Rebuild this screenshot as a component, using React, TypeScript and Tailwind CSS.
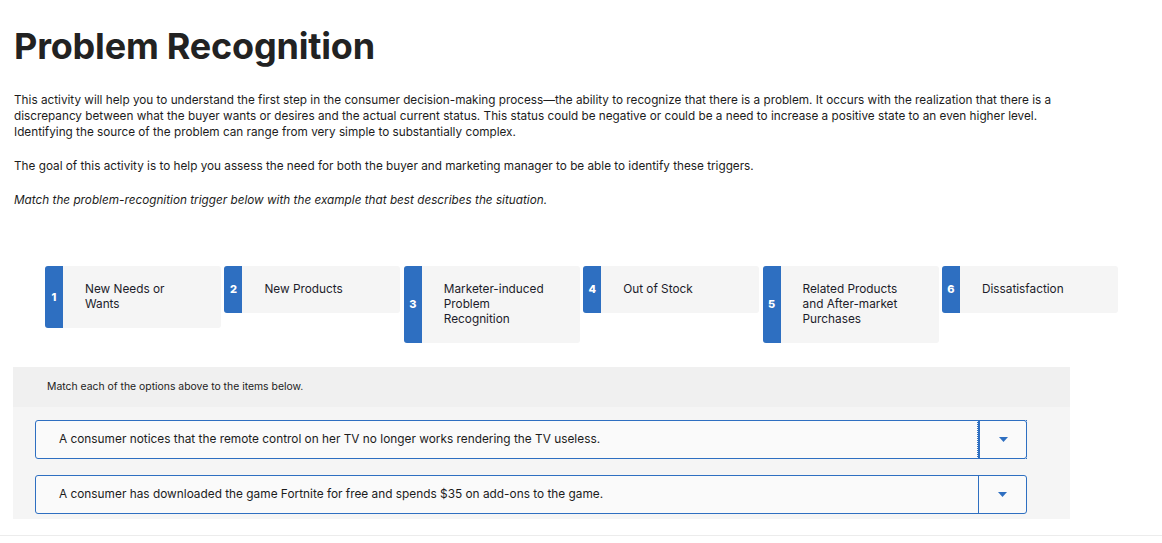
const triggers = [
  { n: 1, label: "New Needs or Wants" },
  { n: 2, label: "New Products" },
  { n: 3, label: "Marketer-induced Problem Recognition" },
  { n: 4, label: "Out of Stock" },
  { n: 5, label: "Related Products and After-market Purchases" },
  { n: 6, label: "Dissatisfaction" },
];

const items = [
  "A consumer notices that the remote control on her TV no longer works rendering the TV useless.",
  "A consumer has downloaded the game Fortnite for free and spends $35 on add-ons to the game.",
];

function Caret() {
  return (
    <svg width="9" height="5" viewBox="0 0 9 5" aria-hidden>
      <path d="M0 0h9L4.5 5z" fill="#2e6fc1" />
    </svg>
  );
}

export default function App() {
  return (
    <div className="min-h-[543px] bg-white font-['Inter',sans-serif] text-[#1c1c1c]">
      <div className="px-[14px] pt-[24px]">
        <h1 className="text-[36px] font-bold leading-[44px] tracking-[-0.2px] text-[#222]">Problem Recognition</h1>
        <p className="mt-[24px] w-[1060px] text-[11.75px] leading-[16px]">
          This activity will help you to understand the first step in the consumer decision-making process—the ability to
          recognize that there is a problem. It occurs with the realization that there is a discrepancy between what the
          buyer wants or desires and the actual current status. This status could be negative or could be a need to
          increase a positive state to an even higher level. Identifying the source of the problem can range from very
          simple to substantially complex.
        </p>
        <p className="mt-[18px] text-[11.75px] leading-[16px]">
          The goal of this activity is to help you assess the need for both the buyer and marketing manager to be able to
          identify these triggers.
        </p>
        <p className="mt-[18px] text-[11.75px] italic leading-[16px]">
          Match the problem-recognition trigger below with the example that best describes the situation.
        </p>
      </div>

      <ul className="ml-[45px] mt-[58px] flex w-[1073px] items-start gap-[3.4px]">
        {triggers.map((t) => (
          <li key={t.n} className="flex w-[176px] items-stretch overflow-hidden rounded-[3px] bg-[#f5f5f5]">
            <span className="flex w-[18px] shrink-0 items-center justify-center bg-[#2e6fc1] text-[11px] font-extrabold text-white">
              {t.n}
            </span>
            <span className="py-[16px] pl-[22px] pr-[26px] text-[11.8px] leading-[15px] text-[#1c1c2a]">{t.label}</span>
          </li>
        ))}
      </ul>

      <section className="ml-[13px] mt-[24px] w-[1057px] bg-[#f5f5f5]">
        <div className="flex h-[40px] items-center bg-[#f0f0f0] pl-[34px] text-[10.4px]">
          Match each of the options above to the items below.
        </div>
        <div className="flex flex-col gap-[16px] pb-[5px] pl-[22px] pr-[43px] pt-[13px]">
          {items.map((text, i) => (
            <div
              key={text}
              className="flex h-[39px] items-stretch rounded-[3px] border border-[#2e6fc1] bg-[#fafafa]"
            >
              <div className="flex flex-1 items-center pl-[23px] text-[11.85px]">{text}</div>
              <button
                className={
                  i === 0
                    ? "flex w-[48px] items-center justify-center border-l-2 border-[#2e6fc1] outline-[1.5px] outline-offset-[0px] outline-dotted outline-[#2e6fc1]"
                    : "flex w-[48px] items-center justify-center border-l border-[#2e6fc1]"
                }
              >
                <Caret />
              </button>
            </div>
          ))}
        </div>
      </section>

      <div className="mt-[16px] border-t border-[#ececec]" />
    </div>
  );
}
